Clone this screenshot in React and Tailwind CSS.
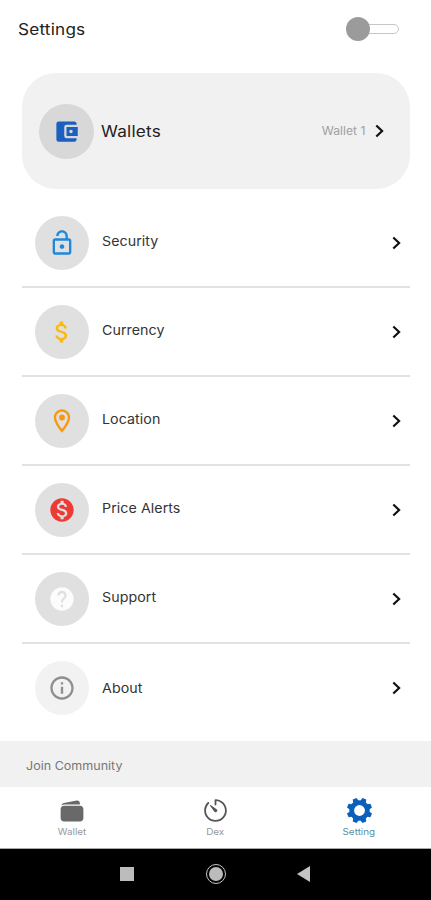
import { IoIosTimer, IoIosWallet } from "react-icons/io";
import {
  MdAccountBalanceWallet,
  MdAttachMoney,
  MdHelp,
  MdInfoOutline,
  MdMonetizationOn,
  MdOutlineLocationOn,
  MdOutlineLockOpen,
} from "react-icons/md";

const ROWS = [
  { label: "Security", icon: MdOutlineLockOpen, color: "text-[#1e88dc]" },
  { label: "Currency", icon: MdAttachMoney, color: "text-[#fbb913]" },
  { label: "Location", icon: MdOutlineLocationOn, color: "text-[#f9980f]" },
  { label: "Price Alerts", icon: MdMonetizationOn, color: "text-[#ee3a34]" },
  { label: "Support", icon: MdHelp, color: "text-[#fcfcfc]" },
  { label: "About", icon: MdInfoOutline, color: "text-[#8e8e8e]" },
];

const Chevron = () => (
  <svg width="10" height="14" viewBox="0 0 10 14" className="shrink-0" fill="none" stroke="#111" strokeWidth="2.2">
    <path d="M1.3 1.5 7.1 7l-5.8 5.5" />
  </svg>
);

const Gear = () => (
  <svg width="27" height="27" viewBox="-13 -13 26 26" fill="#0b5fbd">
    {[22.5, 67.5, 112.5, 157.5].map((a) => (
      <path key={a} d="M-2.8-9 -2-12.2H2L2.8-9V9L2 12.2H-2L-2.8 9Z" transform={`rotate(${a})`} />
    ))}
    <circle r="9.8" />
    <circle r="5.2" fill="#fff" />
  </svg>
);

const SettingRow = ({ label, icon: Icon, color, last }) => (
  <div className={"flex items-center pl-[13px] pr-[8px] " + (last ? "h-[88px]" : "h-[89px] border-b-2 border-[#e2e2e2]")}>
    <span
      className={
        "flex size-[54px] shrink-0 items-center justify-center rounded-full " + (last ? "bg-[#f2f2f2]" : "bg-[#e0e0e0]")
      }
    >
      <Icon className={"size-[28px] " + color} />
    </span>
    <span
      className={
        "ml-[12.5px] flex-1 origin-left scale-x-[1.08] text-[13.2px] tracking-[0.05px] text-[#333] " +
        (last ? "pt-[2px]" : "pb-px")
      }
    >
      {label}
    </span>
    <Chevron />
  </div>
);

export default function App() {
  return (
    <div className="flex h-[900px] w-[431px] flex-col overflow-hidden bg-white font-['Inter',sans-serif]">
      <header className="flex h-[73px] shrink-0 items-start justify-between pl-[18px] pr-[32px] pt-[17px]">
        <h1 className="origin-left scale-x-[1.12] pt-px text-[15.3px] leading-6 tracking-[0.2px] text-[#222]">Settings</h1>
        <button className="flex h-6 items-center" aria-label="Toggle theme">
          <span className="z-10 size-6 rounded-full bg-[#9b9b9b]" />
          <span className="-ml-1 h-[10px] w-[33px] rounded-r-full border border-[#c6c6c6] bg-white" />
        </button>
      </header>

      <section className="ml-[22px] mr-[21px] flex h-[116px] shrink-0 items-center rounded-[34px] bg-[#f1f1f1] pl-[17px] pr-[25px]">
        <span className="flex size-[55px] items-center justify-center rounded-full bg-[#d8d8d8]">
          <MdAccountBalanceWallet className="size-[27px] text-[#1b5fc0]" />
        </span>
        <span className="ml-[7px] flex-1 origin-left scale-x-[1.12] pt-[2px] text-[15.3px] tracking-[0.2px] text-[#222]">
          Wallets
        </span>
        <span className="mr-[10px] origin-right scale-x-[1.08] pt-px text-[11.3px] text-[#a0a0a0]">Wallet 1</span>
        <Chevron />
      </section>

      <main className="ml-[22px] mr-[21px] mt-[10px] h-[542px] shrink-0">
        {ROWS.map((row, i) => (
          <SettingRow key={row.label} {...row} last={i === ROWS.length - 1} />
        ))}
      </main>

      <div className="h-[46px] shrink-0 bg-[#f1f1f1] pl-[26px] pt-[16px]">
        <p className="origin-left scale-x-[1.1] text-[11.4px] leading-[18px] text-[#777]">Join Community</p>
      </div>

      <nav className="grid h-[62px] shrink-0 grid-cols-3 border-b border-[#aaa] text-[9px] leading-[15px] text-[#999]">
        <div className="flex flex-col items-center pt-[10px]">
          <IoIosWallet className="size-[28px] text-[#696969]" />
          <span className="-mt-px scale-x-[1.1]">Wallet</span>
        </div>
        <div className="flex flex-col items-center pt-[9px]">
          <IoIosTimer className="size-[29px] text-[#555]" />
          <span className="-mt-px scale-x-[1.1]">Dex</span>
        </div>
        <div className="flex flex-col items-center pt-[10px] text-[#588fa5]">
          <Gear />
          <span className="scale-x-[1.1]">Setting</span>
        </div>
      </nav>

      <footer className="flex flex-1 items-center bg-black pb-px pl-[120px]">
        <span className="size-[14px] bg-[#bcbcbc]" />
        <span className="ml-[72px] flex size-5 items-center justify-center rounded-full border-[1.5px] border-[#c4c4c4]">
          <span className="size-[14px] rounded-full bg-[#bcbcbc]" />
        </span>
        <svg className="ml-[71px]" width="14" height="16" fill="#c4c4c4">
          <path d="M0 8 13 0v16z" />
        </svg>
      </footer>
    </div>
  );
}
